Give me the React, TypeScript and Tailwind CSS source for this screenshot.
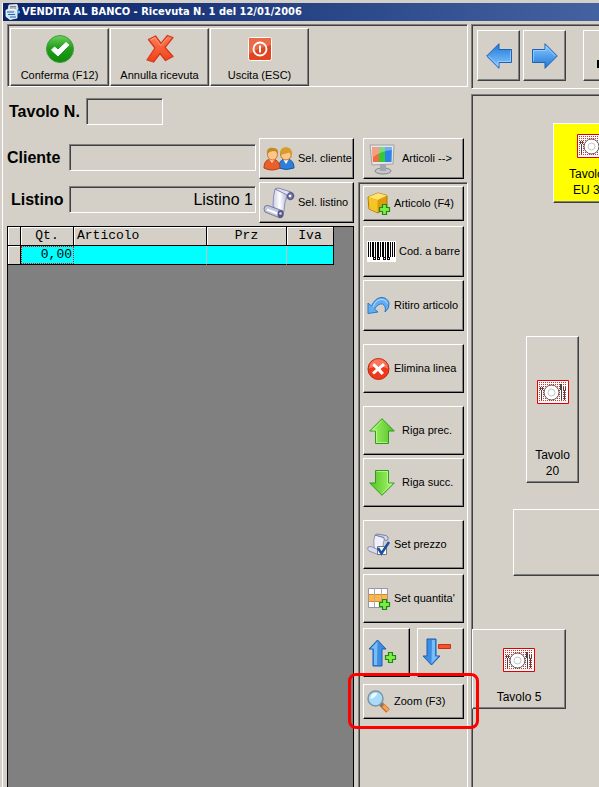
import type { ReactNode } from "react";

const raised =
  "border border-t-white border-l-white border-r-[#404040] border-b-[#404040] shadow-[inset_-1px_-1px_0_#808080]";
const raisedBlack =
  "border border-t-white border-l-white border-r-black border-b-black shadow-[inset_-1px_-1px_0_#808080] bg-[#d4d0c8]";
const sunken =
  "border border-t-[#808080] border-l-[#808080] border-r-white border-b-white shadow-[inset_1px_1px_0_#404040]";

const Check = () => (
  <svg width="30" height="30" viewBox="0 0 30 30">
    <defs>
      <linearGradient id="gc" x1="0" y1="0" x2="0" y2="1">
        <stop offset="0" stopColor="#6fcf5c" />
        <stop offset=".45" stopColor="#23a01c" />
        <stop offset="1" stopColor="#0d8a08" />
      </linearGradient>
    </defs>
    <circle cx="15" cy="15" r="13.5" fill="url(#gc)" stroke="#3f9c3a" />
    <path d="M6.500 16 9.500 13 13 16 21 8.500l3 2.500L13 22Z" fill="#fff" stroke="#fff" strokeLinejoin="round" />
  </svg>
);
const Cross = () => (
  <svg width="30" height="30" viewBox="0 0 30 30">
    <defs>
      <linearGradient id="gx" x1="0" y1="0" x2="0" y2="1">
        <stop offset="0" stopColor="#ff7b55" />
        <stop offset="1" stopColor="#f04018" />
      </linearGradient>
    </defs>
    <path
      d="M3.500 5.500 10.500 2l5.500 7.500L22.500 1.500l5.500 2L20 13.500 28 22.500l-7.500 4-5.500-7L8.500 28 2 26l8-12Z"
      fill="url(#gx)"
      stroke="#d63a17"
      strokeWidth="1.300"
      strokeLinejoin="round"
    />
    <path d="M5.500 6 10 3.500l5.500 8L22.500 3.500" fill="none" stroke="#ffa58a" />
  </svg>
);
const Power = () => (
  <svg width="26" height="26" viewBox="0 0 26 26">
    <rect x="1.500" y="1.500" width="23" height="23" rx="2" fill="#e0451f" stroke="#fff" />
    <path d="M2 18 2 3q0-1 1-1h20q1 0 1 1v6Q12 12 2 18Z" fill="#ea6a48" />
    <circle cx="13" cy="13" r="6.500" fill="none" stroke="#fff" strokeWidth="1.800" />
    <path d="M13 9.500v7" stroke="#fff" strokeWidth="2" />
  </svg>
);
const People = () => (
  <svg width="32" height="24" viewBox="0 0 32 24">
    <path d="M16 21c0-6 2-9 7-9s8 3 8 9q-8 3-15 0Z" fill="#2f7fd6" stroke="#1556a8" />
    <path d="m20 12 3 5 3-5Z" fill="#fff" />
    <ellipse cx="23" cy="7" rx="5.500" ry="6" fill="#ffc58b" stroke="#b67a22" />
    <path d="M17.500 8C16 1 21 0 23 .5c5-.5 7.500 4 5.500 10l-2-5q-4 1-9 2.500Z" fill="#d99b2b" />
    <path d="M1 21c0-6 3-9 7.500-9S17 15 17 21q-8 4-16 0Z" fill="#e8602c" stroke="#b53d12" />
    <path d="m6 12 3 4 3-4Z" fill="#ffd8b0" />
    <ellipse cx="9.500" cy="7.500" rx="5" ry="5.500" fill="#ffc58b" stroke="#c07a30" />
    <path d="M4 7C3 1 8 .5 10 1c4-.5 6 3 5 6l-2-2.500Q8 3 4 7Z" fill="#c28a20" />
  </svg>
);
const Scroll = () => (
  <svg width="32" height="32" viewBox="0 0 32 32">
    <defs>
      <linearGradient id="gs">
        <stop offset="0" stopColor="#c9cbe4" />
        <stop offset=".45" stopColor="#fff" />
        <stop offset="1" stopColor="#a9acd0" />
      </linearGradient>
    </defs>
    <path d="M12 2q-2 7-2 17l7 10q4-1 4-5 0-9 4-17Z" fill="url(#gs)" stroke="#8c8fb5" />
    <path d="M12 2q2-1.500 5-.5L28 5q3 1 3 4-1 4-4 4-4-1-3-5Z" fill="#dfe0f1" stroke="#8286ae" />
    <ellipse cx="27.500" cy="9" rx="3" ry="3.500" fill="#777ba5" stroke="#464a78" />
    <circle cx="27" cy="9" r="1.300" fill="#fff" />
    <path d="M2 19q-2 3 0 6l15 6q4-1 3-7L5 18.500Z" fill="#c4c6de" stroke="#777aa3" />
    <path d="m4 22.500 13 5" stroke="#fff" strokeWidth="2" />
    <ellipse cx="17.500" cy="27" rx="3" ry="4" fill="#55597f" />
    <circle cx="17.500" cy="26.500" r="1.300" fill="#dadced" />
  </svg>
);
const Monitor = () => (
  <svg width="26" height="32" viewBox="0 0 26 32">
    <ellipse cx="14" cy="28" rx="8" ry="3" fill="#c3c7cb" stroke="#83878b" />
    <path d="M11 21h6v7h-6Z" fill="#a2a6aa" />
    <path d="M1 2h24l-1 19-21 1Z" fill="#e3e6e8" stroke="#9da2a6" />
    <path d="M3 4h7v15H4Z" fill="#f56b3c" />
    <path d="M10 4h6v15h-6Z" fill="#37c837" />
    <path d="M16 4h7l-.5 15H16Z" fill="#2b83e8" />
    <path d="M3 4h20v3Q12 8 4 14Z" fill="#fff" opacity=".35" />
  </svg>
);
const Plus = ({ x, y }: { x: number; y: number }) => (
  <path
    transform={`translate(${x} ${y})`}
    d="M3.500.5h4v3h3v4h-3v3h-4v-3h-3v-4h3Z"
    fill="#7dea45"
    stroke="#1d8a12"
    strokeWidth="1.200"
  />
);
const Box = () => (
  <svg width="24" height="24" viewBox="0 0 24 24">
    <path d="M1 5 11 1l9 2.500V15L11 21 2 17Z" fill="#dd9c0c" stroke="#a9780b" strokeLinejoin="round" />
    <path d="M1 5 11 1l9 2.500L10.500 8Z" fill="#ffe36e" />
    <path d="M1.500 5.500 10.500 8v12.500L2.500 17Z" fill="#f6c427" />
    <Plus x={12} y={12} />
  </svg>
);
const Barcode = () => (
  <svg width="29" height="21" viewBox="0 0 29 21" shapeRendering="crispEdges">
    <path d="M0 0h29v21H0Z" fill="#fff" />
    <path d="M1 1h1v15h-1ZM3 1h1v15h-1ZM5 1h2v15h-2ZM8 1h1v15h-1ZM10 1h2v15h-2ZM13 1h1v15h-1ZM15 1h2v15h-2ZM18 1h1v15h-1ZM20 1h2v15h-2ZM23 1h1v15h-1ZM25 1h1v15h-1ZM27 1h1v15h-1Z" />
    <path
      d="M6.500 16.500h2v2h-2ZM10.500 16.500h2v2h-2ZM16.500 16.500h2v2h-2ZM20.500 16.500h2v2h-2Z"
      fill="#fff"
      stroke="#000"
    />
  </svg>
);
const Undo = () => (
  <svg width="24" height="20" viewBox="0 0 24 20">
    <path
      d="M1 7v10.500l10-1.500-3.500-3q4-6 8-5 4 2 2.500 8 5-4 4-9Q20 1 14 1.500 8 2 4.500 10Z"
      fill="#63aef2"
      stroke="#2d77c9"
      strokeLinejoin="round"
    />
    <path d="M6 11q3-8 9-7.500 4 0 5.500 4" fill="none" stroke="#b5dcff" />
  </svg>
);
const Delete = () => (
  <svg width="24" height="24" viewBox="0 0 24 24">
    <circle cx="11.500" cy="12" r="10.500" fill="#ee3a1a" stroke="#bc2a10" />
    <path d="M2 11.500a9.500 9.500 0 0 1 19 0q-9-4-19 0Z" fill="#fa765c" />
    <path
      d="m7 6 4.500 4L16 6l2 2.500-4.500 3.500 3.500 4-2.500 2-3.500-4L7 17.500l-2-2 4-3.500L5.500 8.500Z"
      fill="#fff"
    />
  </svg>
);
const BigArrow = ({ dir, blue }: { dir: "up" | "down" | "left" | "right"; blue?: boolean }) => {
  const turn = { up: 0, right: 90, down: 180, left: 270 }[dir];
  const id = `arrow-${dir}`;
  return (
    <svg width="26" height="26" viewBox="0 0 26 26">
      <defs>
        <linearGradient id={id}>
          <stop offset="0" stopColor={blue ? "#8ccbff" : "#a8f56e"} />
          <stop offset="1" stopColor={blue ? "#1c77d8" : "#52c422"} />
        </linearGradient>
      </defs>
      <g transform={`rotate(${turn} 13 13)`}>
        <path
          d="M13 .7 25.300 13h-5.800v12.500h-13V13H.7Z"
          fill={`url(#${id})`}
          stroke={blue ? "#1e5fb8" : "#2f9a1c"}
          strokeLinejoin="round"
        />
        <path
          d="M13 2.500 3.500 12h4v12.500h11"
          fill="none"
          stroke={blue ? "#a5d8ff" : "#c4ff96"}
          opacity=".7"
        />
      </g>
    </svg>
  );
};
const SetPrice = () => (
  <svg width="24" height="24" viewBox="0 0 24 24">
    <path d="M8 2q-2 5-1 12l6 6q3-2 3-6 0-5 2-9Z" fill="#f0f0fa" stroke="#8f92b4" />
    <path d="m8 2 2-1 9 1.500q3 1 2 4-2 2-4 0l0-2Z" fill="#d7d9ec" stroke="#7b7fa6" />
    <path d="M1 14q-1 3 1 4l10 4V17L4 13.500Z" fill="#dcddec" stroke="#8f92b4" />
    <path d="M10.500 13.500h9v8h-9Z" fill="#fff" stroke="#777" />
    <path d="m11 15 3.500 5.500L22 9" fill="none" stroke="#1b4fa8" strokeWidth="2.500" />
  </svg>
);
const Grid = () => (
  <svg width="24" height="24" viewBox="0 0 24 24">
    <path d="M1.500 1.500h19v19h-19Z" fill="#fff" stroke="#9496ae" />
    <path d="M2 8h18v6H2Z" fill="#ffb64a" />
    <path d="M1.500 7.500h19M1.500 14.500h19" stroke="#d78a26" />
    <path d="M7.500 2v18M14.500 2v18" stroke="#b5a9a2" />
    <Plus x={12} y={12} />
  </svg>
);
const TallArrow = ({ down }: { down?: boolean }) => (
  <svg width="30" height="30" viewBox="0 0 30 30">
    <g transform={down ? "rotate(180 9.500 14)" : "translate(0 1)"}>
      <path d="M9.500 1 18 10h-4v17H5V10H1Z" fill="#3c8ee2" stroke="#1d5cab" strokeLinejoin="round" />
      <path d="M9.500 2.500 3 9.500h3V26h3Z" fill="#79bdf8" />
    </g>
    {down ? <path d="M16.500 6.500h12v4h-12Z" fill="#f5532a" stroke="#c4320f" /> : <Plus x={17} y={14} />}
  </svg>
);
const Magnifier = () => (
  <svg width="24" height="24" viewBox="0 0 24 24">
    <path d="m14 14 7 7" stroke="#c96a2c" strokeWidth="5" />
    <path d="m15 14.500 6 6" stroke="#ffa34a" strokeWidth="3" />
    <path d="m13 13 3 3" stroke="#777" strokeWidth="3" />
    <circle cx="8.500" cy="8.500" r="7.500" fill="#a9dcf8" stroke="#7e94a6" strokeWidth="1.500" />
    <path d="M3.500 9a5 5 0 0 1 7-5.500Q8 8 3.500 9Z" fill="#eefaff" />
  </svg>
);
const Plate = () => (
  <svg width="32" height="24" viewBox="0 0 32 24" className="shrink-0">
    <defs>
      <pattern id="dots" width="2" height="2" patternUnits="userSpaceOnUse">
        <path d="M0 0h1v1H0Z" fill="#d83030" />
      </pattern>
    </defs>
    <path d="M.5.500h31v23H.5Z" fill="#fff" stroke="#e00000" />
    <path d="M2 2h28v20H2Z" fill="url(#dots)" />
    <circle cx="14.500" cy="12.500" r="7.500" fill="#fff" stroke="#555" />
    <circle cx="14.500" cy="12.500" r="3.500" fill="none" stroke="#c4c4c4" />
    <path
      d="M3 7h1v3h-1ZM5 7h1v3h-1ZM4 10h1v10h-1ZM23 4h2v6h-2ZM24 10h1v10h-1ZM26 7h1v3h-1ZM28 7h1v3h-1ZM27 10h1v10h-1Z"
      fill="#444"
    />
  </svg>
);
const AppIcon = () => (
  <svg width="16" height="16" viewBox="0 0 16 16">
    <path d="M4 1 12 .5l1 4L12 8 3 6Z" fill="#d9dde2" stroke="#f4f6f8" strokeWidth=".8" />
    <path d="M5 2.500h6M5 4h6" stroke="#7d868f" />
    <path d="M1 6 9 5l3 3v6l-7 1.500-4-3Z" fill="#cfe4f5" stroke="#fff" strokeWidth=".8" />
    <path d="M2 8h7M3 10.500h7M5 13h6" stroke="#2566a8" strokeWidth="1.200" />
    <path d="m12 6 3 1v2l-3 1Z" fill="#53aee8" />
  </svg>
);

function TopButton({ icon, label }: { icon: ReactNode; label: string }) {
  return (
    <button className={`${raised} flex h-[58px] w-[99px] flex-col items-center justify-between pt-1 pb-0.5`}>
      <span className="flex h-8 items-center">{icon}</span>
      <span className="leading-4">{label}</span>
    </button>
  );
}

function SideButton({ icon, label, className }: { icon: ReactNode; label: string; className: string }) {
  return (
    <button className={`${raisedBlack} flex w-full shrink-0 items-center whitespace-nowrap ${className}`}>
      {icon}
      <span>{label}</span>
    </button>
  );
}

function Field({ id, value, className }: { id: string; value?: string; className: string }) {
  return (
    <input
      id={id}
      readOnly
      defaultValue={value}
      className={`${sunken} h-[27px] bg-transparent px-0.5 text-right text-base outline-none ${className}`}
    />
  );
}

function TableButton({ name, className, children }: { name: string; className: string; children?: ReactNode }) {
  return (
    <button
      aria-label={name}
      className={`${raised} absolute flex flex-col items-center text-[12px] leading-4 ${className}`}
    >
      {children}
    </button>
  );
}

const headCell = "border-r border-b border-black p-0 font-normal shadow-[inset_1px_1px_0_#fff]";
const bodyCell = "border-r border-b border-r-[#c0c0c0] border-b-black bg-[#00ffff]";

export default function App() {
  return (
    <div className="flex h-screen min-h-[787px] flex-col overflow-hidden bg-[#d4d0c8] pt-[3px] font-['Liberation_Sans',Arial,sans-serif] text-[11px] text-black">
      <div className="ml-0.5 flex flex-1 flex-col border-l border-white">
        <header className="flex h-[18px] shrink-0 items-center gap-px bg-linear-to-r from-[#0a246a] to-[#4562a0] pl-0.5">
          <AppIcon />
          <h1 className="whitespace-nowrap font-['DejaVu_Sans_Condensed','DejaVu_Sans',sans-serif] text-[11px] font-bold text-white">
            VENDITA AL BANCO - Ricevuta N. 1 del 12/01/2006
          </h1>
        </header>
        <div className="flex min-h-0 flex-1 gap-[3px] pt-[3px] pl-1">
          <main className="relative z-10 flex w-[461px] shrink-0 flex-col">
            <div className={`${sunken} flex h-[63px] shrink-0 gap-px pt-[3px] pl-[2px]`}>
              <TopButton icon={<Check />} label="Conferma (F12)" />
              <TopButton icon={<Cross />} label="Annulla ricevuta" />
              <TopButton icon={<Power />} label="Uscita (ESC)" />
            </div>
            <div className="flex min-h-0 flex-1 gap-1">
              <section className="flex w-[347px] flex-col pt-[11px]">
                <div className="flex items-center gap-1.5 pl-0.5">
                  <label htmlFor="tavolo" className="text-base font-bold">Tavolo N.</label>
                  <Field id="tavolo" className="w-[77px]" />
                </div>
                <div className="mt-[13px] flex gap-[3px]">
                  <div className="flex min-w-0 flex-1 flex-col gap-[15px] pt-1.5">
                    <div className="flex items-center">
                      <label htmlFor="cliente" className="w-[62px] text-base font-bold">Cliente</label>
                      <Field id="cliente" className="min-w-0 flex-1" />
                    </div>
                    <div className="flex items-center">
                      <label htmlFor="listino" className="w-[62px] pl-1 text-base font-bold">Listino</label>
                      <Field id="listino" value="Listino 1" className="min-w-0 flex-1" />
                    </div>
                  </div>
                  <div className="flex w-[95px] shrink-0 flex-col gap-[3px]">
                    <SideButton icon={<People />} label="Sel. cliente" className="h-[41px] gap-[3px] pl-[3px]" />
                    <SideButton icon={<Scroll />} label="Sel. listino" className="h-[41px] gap-[3px] pl-[3px]" />
                  </div>
                </div>
                <div className="mt-[3px] flex-1 border border-b-0 border-black bg-[#808080]">
                  <table className="w-[326px] table-fixed border-separate border-spacing-0 font-['Liberation_Mono','Courier_New',monospace] text-[13px] leading-4">
                    <colgroup>
                      <col className="w-[13px]" />
                      <col className="w-[53px]" />
                      <col className="w-[133px]" />
                      <col className="w-[80px]" />
                      <col className="w-[47px]" />
                    </colgroup>
                    <thead>
                      <tr className="h-[19px] bg-[#d4d0c8]">
                        <th className={headCell} />
                        <th className={headCell}>Qt.</th>
                        <th className={`${headCell} text-left`}><span className="pl-[3px]">Articolo</span></th>
                        <th className={headCell}>Prz</th>
                        <th className={headCell}>Iva</th>
                      </tr>
                    </thead>
                    <tbody>
                      <tr className="h-[19px]">
                        <td className={`${headCell} bg-[#d4d0c8]`} />
                        <td className="border-b border-black bg-[#00ffff] p-0 text-right">
                          <div className="h-[18px] border border-dotted border-[#ff0000] pr-px">0,00</div>
                        </td>
                        <td className={bodyCell} />
                        <td className={bodyCell} />
                        <td className="border-r border-b border-black bg-[#00ffff]" />
                      </tr>
                    </tbody>
                  </table>
                </div>
              </section>
              <aside className="flex flex-1 flex-col">
                <div className="mt-[51px] pr-1 pl-[5px]">
                  <SideButton icon={<Monitor />} label="Articoli -->" className="h-[41px] gap-[7px] pl-[5px]" />
                </div>
                <div className={`${sunken} mt-[3px] flex flex-1 flex-col border-b-0 pt-[3px] pr-[3px] pl-1`}>
                  <SideButton icon={<Box />} label="Articolo (F4)" className="h-[35px] gap-[3px] pl-[3px]" />
                  <SideButton icon={<Barcode />} label="Cod. a barre" className="mt-[5px] h-[51px] gap-[3px] pl-[3px]" />
                  <SideButton icon={<Undo />} label="Ritiro articolo" className="mt-[3px] h-[51px] gap-[3px] pl-[3px]" />
                  <SideButton icon={<Delete />} label="Elimina linea" className="mt-[13px] h-[49px] gap-[3px] pl-[3px]" />
                  <SideButton icon={<BigArrow dir="up" />} label="Riga prec." className="mt-[13px] h-[49px] gap-[7px] pl-[5px]" />
                  <SideButton icon={<BigArrow dir="down" />} label="Riga succ." className="mt-[3px] h-[49px] gap-[7px] pl-[5px]" />
                  <SideButton icon={<SetPrice />} label="Set prezzo" className="mt-[13px] h-[49px] gap-[3px] pl-[3px]" />
                  <SideButton icon={<Grid />} label="Set quantita'" className="mt-[5px] h-[49px] gap-[3px] pl-[3px]" />
                  <div className="mt-[5px] flex shrink-0 justify-between">
                    <button aria-label="Aggiungi" className={`${raisedBlack} flex h-[49px] w-[47px] items-center pl-1`}>
                      <TallArrow />
                    </button>
                    <button aria-label="Togli" className={`${raisedBlack} flex h-[49px] w-[47px] items-center pl-1`}>
                      <TallArrow down />
                    </button>
                  </div>
                  <div className="relative mt-[7px]">
                    <SideButton icon={<Magnifier />} label="Zoom (F3)" className="h-[35px] gap-[3px] pl-[3px]" />
                    <div className="pointer-events-none absolute -inset-x-[15px] -top-[11px] -bottom-[10px] rounded-lg border-3 border-[#ff0000]" />
                  </div>
                </div>
              </aside>
            </div>
          </main>
          <section className="flex min-w-0 flex-1 flex-col gap-[5px]">
            <div className={`${sunken} flex h-[65px] shrink-0 gap-[3px] overflow-hidden border-r-0 pt-[5px] pl-[5px]`}>
              <button aria-label="Indietro" className={`${raised} flex h-[51px] w-[43px] shrink-0 items-center justify-center`}>
                <BigArrow dir="left" blue />
              </button>
              <button aria-label="Avanti" className={`${raised} flex h-[51px] w-[43px] shrink-0 items-center justify-center`}>
                <BigArrow dir="right" blue />
              </button>
              <button aria-label="Sala" className={`${raised} ml-3.5 flex h-[51px] w-[99px] shrink-0 items-center pl-[13px]`}>
                <span className="mt-4 h-2 w-12 bg-black" />
              </button>
            </div>
            <div className={`${sunken} relative flex-1 overflow-hidden border-r-0 border-b-0`}>
              <TableButton name="Tavolo EU 3" className="top-[28px] left-[81px] h-20 w-20 bg-[#ffff00] pt-2.5 pb-1">
                <Plate />
                <span className="mt-auto w-full pl-[15px] text-left">Tavolo</span>
                <span className="w-full pl-[19px] text-left">EU 3</span>
              </TableButton>
              <TableButton name="Tavolo 20" className="top-[241px] left-[54px] h-[147px] w-[53px] px-1 pt-[43px] pb-[3px]">
                <Plate />
                <span className="mt-auto">Tavolo 20</span>
              </TableButton>
              <TableButton name="Tavolo" className="top-[414px] left-[41px] h-[67px] w-[120px]" />
              <TableButton name="Tavolo 5" className="top-[534px] left-0 h-20 w-[94px] pt-[18px] pb-[3px]">
                <Plate />
                <span className="mt-auto">Tavolo 5</span>
              </TableButton>
            </div>
          </section>
        </div>
      </div>
    </div>
  );
}
